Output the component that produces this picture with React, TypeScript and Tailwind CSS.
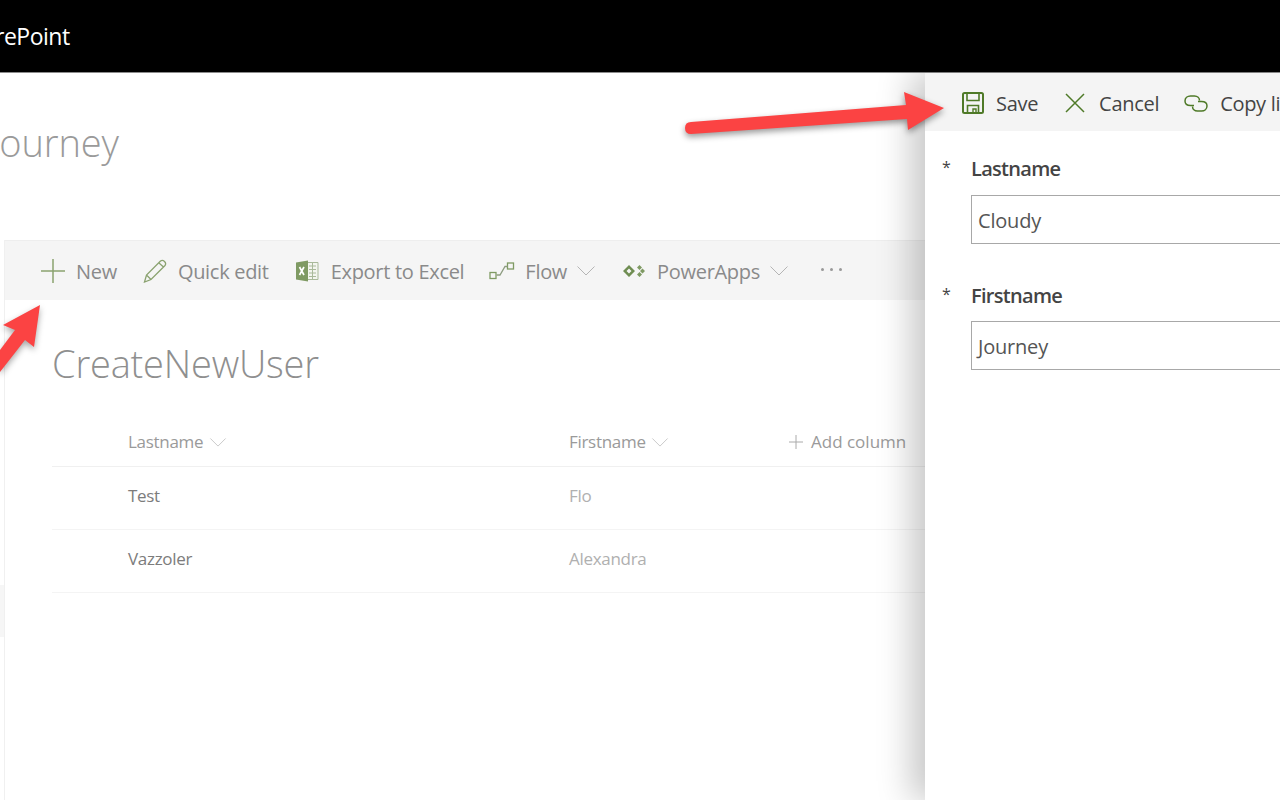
const font = { fontFamily: '"Open Sans", "Noto Sans", sans-serif' };

function Chevron({ className }: { className: string }) {
  return (
    <svg viewBox="0 0 18 10" fill="none" stroke="currentColor" strokeWidth="1" className={className}>
      <path d="M0.5 0.5 L9 9 L17.5 0.5" />
    </svg>
  );
}

function ExcelIcon() {
  return (
    <svg viewBox="0 0 24 24" className="w-6 h-6">
      <path d="M9 3.5h14v17H9z" fill="#f3f5ef" stroke="#a9b99a" />
      <path d="M14 7h7M14 10.500h7M14 14h7M14 17.500h7M17.500 4v16" stroke="#a9b99a" strokeWidth="1" />
      <path d="M1 3.500 L13 1.500 V22.500 L1 20.500 Z" fill="#7f9a63" />
      <path d="M4.500 8 L9 16M9 8 L4.500 16" stroke="#fff" strokeWidth="1.700" />
    </svg>
  );
}

function FlowIcon() {
  return (
    <svg viewBox="0 0 26 20" fill="none" stroke="#7f9a63" strokeWidth="1.300" className="w-[26px] h-5">
      <rect x="1" y="11.500" width="6" height="6" />
      <rect x="18.500" y="2" width="6" height="6" />
      <path d="M7.500 14 L11 14 L16 5.500 L18.500 5.500" stroke="#8d9c80" />
    </svg>
  );
}

function PowerAppsIcon() {
  return (
    <svg viewBox="0 0 22 14" className="w-[22px] h-[14px]">
      <path d="M6 1 L12 7 L6 13 L0 7 Z M6 4.500 L3.500 7 L6 9.500 L8.500 7 Z" fill="#6f8d52" fillRule="evenodd" />
      <path d="M16.500 1 L19 3.500 L16.500 6 L14 3.500 Z M16.500 8 L19 10.500 L16.500 13 L14 10.500 Z M19.500 4.500 L22 7 L19.500 9.500 L17 7 Z" fill="#7f9a63" />
    </svg>
  );
}

function CommandItem({ icon, label, chevron, gap = 'ml-[11px]', className = '' }: { icon: React.ReactNode; label: string; chevron?: boolean; gap?: string; className?: string }) {
  return (
    <div className={`flex items-center ${className}`}>
      {icon}
      <span className={`${gap} pt-[2px] text-[20px] tracking-[-0.3px] text-[#8a8a8a]`}>{label}</span>
      {chevron && <Chevron className="ml-[10px] w-[18px] h-[10px] text-[#b5b5b5]" />}
    </div>
  );
}

export default function App() {
  return (
    <div className="relative w-[1280px] h-[800px] overflow-hidden bg-white" style={font}>
      <header className="h-[73px] bg-black border-b border-[#8c8c8c] flex items-center overflow-hidden">
        <span className="-ml-[43px] text-[23px] tracking-[-0.5px] text-white">SharePoint</span>
      </header>

      <div className="h-[167px] overflow-hidden">
        <div className="-ml-[10px] mt-[39px] text-[38px] font-light leading-[60px] tracking-[-0.1px] text-[#9a9a9a]">Journey</div>
      </div>

      <div className="flex h-[560px]">
        <div className="w-[5px] border-r border-[#f0f0f0] flex flex-col">
          <div className="mt-[345px] h-[52px] bg-[#f6f6f6]" />
        </div>
        <main className="flex-1">
          <div className="h-[60px] bg-[#f5f5f5] border-t border-[#eeeeee] flex items-center pl-[36px] gap-[26px]">
            <CommandItem
              label="New"
              icon={
                <svg viewBox="0 0 24 24" stroke="#8aa26f" strokeWidth="1.500" className="w-6 h-6">
                  <path d="M0 12H24M12 0V24" />
                </svg>
              }
            />
            <CommandItem
              label="Quick edit"
              icon={
                <svg viewBox="0 0 24 24" fill="none" stroke="#8aa26f" strokeWidth="1.300" className="w-6 h-6">
                  <path d="M1.500 23 L3.500 16 L17.500 2 Q19.500 0.500 21.500 2.500 Q23.500 4.500 22 6.500 L8 20.500 Z M3.500 16 L8 20.500 M16 4 L20.500 8" />
                </svg>
              }
            />
            <CommandItem label="Export to Excel" icon={<ExcelIcon />} gap="ml-[12px]" />
            <CommandItem label="Flow" icon={<FlowIcon />} gap="ml-[10px]" className="-ml-[1px]" chevron />
            <CommandItem label="PowerApps" icon={<PowerAppsIcon />} gap="ml-[12px]" className="ml-[2px]" chevron />
            <div className="flex gap-[6px] ml-[7px] -mt-[2px]">
              <div className="w-[3px] h-[3px] rounded-full bg-[#999999]" />
              <div className="w-[3px] h-[3px] rounded-full bg-[#999999]" />
              <div className="w-[3px] h-[3px] rounded-full bg-[#999999]" />
            </div>
          </div>

          <div className="pl-[47px]">
            <h1 className="mt-[35px] h-[56px] text-[38px] leading-[56px] font-light tracking-[-0.2px] text-[#8f8f8f]">CreateNewUser</h1>
            <div className="mt-[29px] w-[900px] h-[47px] pb-[2px] border-b border-[#f0f0f0] flex items-center pl-[76px] text-[17px] tracking-[-0.3px] text-[#9a9a9a]">
              <span className="flex items-center w-[441px]">
                Lastname
                <Chevron className="ml-[6px] w-[18px] h-[9px] text-[#c4c4c4]" />
              </span>
              <span className="flex items-center w-[220px]">
                Firstname
                <Chevron className="ml-[5px] w-[18px] h-[9px] text-[#c4c4c4]" />
              </span>
              <span className="flex items-center tracking-[0px]">
                <svg viewBox="0 0 14 14" stroke="#aaaaaa" className="w-[14px] h-[14px] mr-[8px]">
                  <path d="M0 7H14M7 0V14" />
                </svg>
                Add column
              </span>
            </div>
            {[
              ['Test', 'Flo'],
              ['Vazzoler', 'Alexandra'],
            ].map(([last, first]) => (
              <div key={last} className="w-[900px] h-[63px] pb-[5px] border-b border-[#f4f4f4] flex items-center pl-[76px] text-[17px] tracking-[-0.3px]">
                <span className="w-[441px] text-[#7c7c7c]">{last}</span>
                <span className="text-[#b0b0b0]">{first}</span>
              </div>
            ))}
          </div>
        </main>
      </div>

      {/* edit panel */}
      <aside className="absolute left-[925px] top-[73px] bottom-0 w-[355px] overflow-hidden bg-white shadow-[-14px_0_32px_rgba(0,0,0,0.22)]">
        <div className="h-[58px] pt-[4px] bg-[#f4f4f4] flex items-center pl-[37px] text-[20px] tracking-[-0.3px] text-[#444444] whitespace-nowrap">
          <svg viewBox="0 0 22 22" fill="none" stroke="#4f7a28" strokeWidth="2" className="shrink-0 w-[22px] h-[22px] -mt-[2px]">
            <path d="M2.500 1H19.500Q21 1 21 2.500V19.500Q21 21 19.500 21H2.500Q1 21 1 19.500V2.500Q1 1 2.500 1Z" />
            <path d="M5 1V8.500H17V1M5.500 21V13.500H16.500V21" strokeWidth="1.600" />
            <path d="M11 21V17H14V21" strokeWidth="1.400" />
          </svg>
          <span className="ml-[12px]">Save</span>
          <svg viewBox="0 0 20 20" stroke="#4f7a28" strokeWidth="1.500" className="shrink-0 ml-[27px] w-5 h-5 -mt-[2px]">
            <path d="M1 1L19 19M19 1L1 19" />
          </svg>
          <span className="ml-[14px]">Cancel</span>
          <svg viewBox="0 0 24 17" fill="none" stroke="#4f7a28" strokeWidth="1.500" className="shrink-0 ml-[25px] w-[24px] h-[17px] -mt-[2px]">
            <path d="M10 10.500H6.500C3 10.500 1 8.500 1 6C1 3 3.500 1 6.500 1H10.500C13.500 1 15.500 3 15.500 5.500" />
            <path d="M14 6.500H17.500C21 6.500 23 8.500 23 11C23 14 20.500 16 17.500 16H13.500C10.500 16 8.500 14 8.500 11.500" />
          </svg>
          <span className="ml-[12px]">Copy link</span>
        </div>

        <div className="pl-[17px]">
          <div className="mt-[19px] mb-[7px] flex items-center h-[38px]">
            <span className="w-[29px] text-[16px] text-[#444444] -mt-[4px]">*</span>
            <span className="text-[20px] font-semibold tracking-[-0.7px] text-[#444444]">Lastname</span>
          </div>
          <div className="ml-[29px] w-[340px] h-[49px] pt-[2px] border border-[#a8a8a8] flex items-center pl-[6px] text-[20px] tracking-[-0.2px] text-[#555555]">Cloudy</div>
          <div className="mt-[33px] mb-[6px] flex items-center h-[38px]">
            <span className="w-[29px] text-[16px] text-[#444444] -mt-[4px]">*</span>
            <span className="text-[20px] font-semibold tracking-[-0.7px] text-[#444444]">Firstname</span>
          </div>
          <div className="ml-[29px] w-[340px] h-[49px] pt-[2px] border border-[#a8a8a8] flex items-center pl-[6px] text-[20px] tracking-[-0.2px] text-[#555555]">Journey</div>
        </div>
      </aside>

      {/* annotation arrows */}
      <svg viewBox="0 0 280 60" className="absolute left-[680px] top-[85px] w-[280px] h-[60px] drop-shadow-[0_3px_3px_rgba(0,0,0,0.4)]">
        <path d="M11 37 L226 20 L224 7 L264 23 L228 45 L227 34 L11 49 Q5 49 5 43 Q5 37 11 37 Z" fill="#fb4343" />
      </svg>
      <svg viewBox="0 0 50 75" className="absolute left-0 top-[300px] w-[50px] h-[75px] drop-shadow-[0_3px_3px_rgba(0,0,0,0.35)]">
        <path d="M40 5 L34 47 L25 40 L0 72 L0 50 L15 30 L3 25 Z" fill="#fb4343" />
      </svg>
    </div>
  );
}
